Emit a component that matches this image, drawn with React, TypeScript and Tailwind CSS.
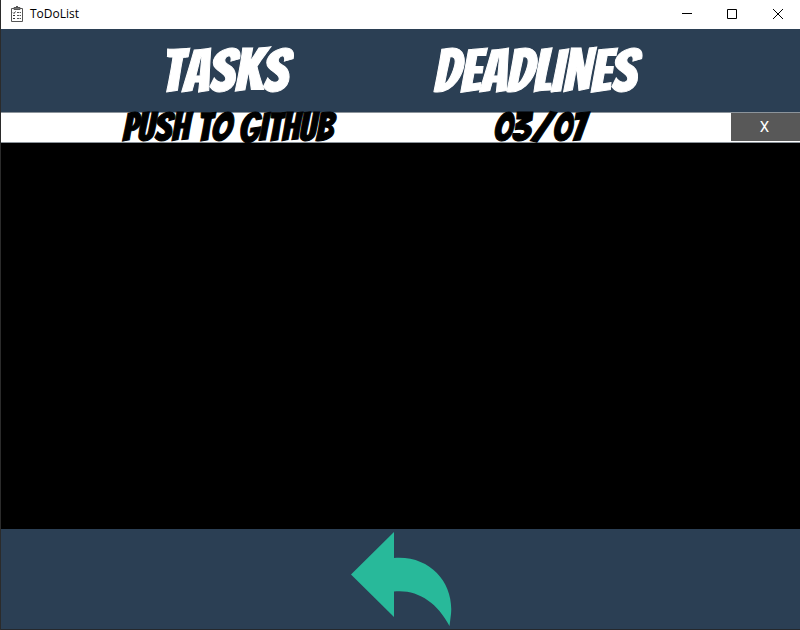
import { useState } from "react";

const display =
  "font-['Bangers','Liberation_Sans_Narrow','Liberation_Sans',sans-serif] font-normal whitespace-nowrap [font-kerning:none] [-webkit-text-stroke:1px_currentColor]";

function AppIcon() {
  return (
    <svg viewBox="0 0 14 16" className="h-4 w-3.5" fill="none" stroke="#555" aria-hidden="true">
      <path d="M1.5 2.5h11v13h-11z" strokeWidth="1" />
      <path d="M4 1.5h6v2H4z" fill="#777" />
      <path d="M6 .5h2" />
      <path d="M3 6.500l1 1 1.500-2M3 9.500h2M3 12.500h2" stroke="#333" />
      <path d="M7 6.500h4M7 9.500h4M7 12.500h4" strokeDasharray="2 .6" />
    </svg>
  );
}

function TitleBar() {
  const control = "flex h-7 items-center justify-center";
  return (
    <header className="flex h-[29px] items-start bg-white text-black">
      <div className="flex h-[27px] flex-1 items-center gap-1.5 pl-[9px]">
        <AppIcon />
        <h1 className="font-['Segoe_UI','Open_Sans',sans-serif] text-[12px] leading-4">ToDoList</h1>
      </div>
      <div className="flex">
        <button className={`${control} w-[46px]`} aria-label="Minimize">
          <svg viewBox="0 0 10 10" className="size-2.5" stroke="#000" aria-hidden="true"><path d="M0 4.500h10" /></svg>
        </button>
        <button className={`${control} w-11`} aria-label="Maximize">
          <svg viewBox="0 0 10 10" className="size-2.5" fill="none" stroke="#000" aria-hidden="true"><path d="M.5 .5h9v9h-9z" /></svg>
        </button>
        <button className={`${control} w-[46px] pl-0.5`} aria-label="Close">
          <svg viewBox="0 0 10 10" className="size-2.5" stroke="#000" aria-hidden="true"><path d="M0 0l10 10M10 0L0 10" /></svg>
        </button>
      </div>
    </header>
  );
}

export default function App() {
  const [tasks, setTasks] = useState([{ name: "PUSH TO GITHUB", deadline: "03/07" }]);
  return (
    <div className="flex min-h-screen flex-col border-l border-[#2b2b2b] bg-black">
      <TitleBar />
      <main className="flex flex-1 flex-col">
        <table className="w-full table-fixed border-collapse">
          <colgroup>
            <col className="w-[7%]" />
            <col className="w-[43%]" />
            <col className="w-[35%]" />
            <col />
            <col className="w-[69px]" />
          </colgroup>
          <thead className="bg-[#2b3f54] text-white">
            <tr className="h-[83px]">
              <td className="p-0" />
              <th className={`${display} pt-0.5 pr-2 pb-0 pl-0 text-[60px] leading-[60px]`}>TASKS</th>
              <th className={`${display} pt-0.5 pr-2.5 pb-0 pl-0 text-[60px] leading-[60px]`}>DEADLINES</th>
              <td className="p-0" />
              <td className="p-0" />
            </tr>
          </thead>
          <tbody className="bg-white text-black">
            {tasks.map((task, i) => (
              <tr key={i} className="h-[30px] border-y border-[#8c949b]">
                <td className="p-0" />
                <td className={`${display} p-0 pr-0.5 text-center text-[40px] leading-7`}>{task.name}</td>
                <td className={`${display} p-0 pr-0.5 text-center text-[40px] leading-7`}>{task.deadline}</td>
                <td className="p-0" />
                <td className="p-0">
                  <button
                    aria-label={`X ${task.name}`}
                    onClick={() => setTasks(tasks.filter((_, n) => n !== i))}
                    className="block h-7 w-full bg-[#585858] pr-0.5 font-['Roboto',sans-serif] text-[15px] leading-7 text-white"
                  >
                    X
                  </button>
                </td>
              </tr>
            ))}
          </tbody>
        </table>
      </main>
      <footer className="flex h-[101px] justify-center border-b border-[#25282c] bg-[#2b3f54]">
        <button aria-label="Back" className="h-[100px] w-[102px]">
          <svg viewBox="0 0 102 100" className="h-[100px] w-[102px]" fill="#28b99a" aria-hidden="true">
            <path d="M1 45.500L44 3v26C80 26 104 54 101 85L99.500 97C87 73 67 60 44 62.500V88z" />
          </svg>
        </button>
      </footer>
    </div>
  );
}
